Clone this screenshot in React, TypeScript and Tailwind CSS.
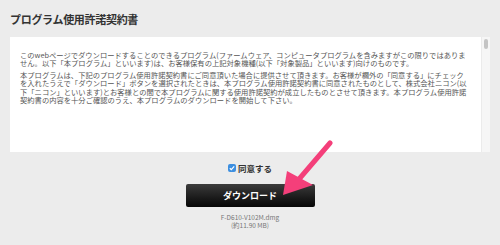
import React from "react";

const font = { fontFamily: '"Noto Sans CJK JP", "Noto Sans", sans-serif' };

const para1 = [
  "このwebページでダウンロードすることのできるプログラム(ファームウェア、コンピュータプログラムを含みますがこの限りではありま",
  "せん。以下「本プログラム」といいます)は、お客様保有の上記対象機種(以下「対象製品」といいます)向けのものです。",
];

const para2 = [
  "本プログラムは、下記のプログラム使用許諾契約書にご同意頂いた場合に提供させて頂きます。お客様が欄外の「同意する」にチェック",
  "を入れたうえで「ダウンロード」ボタンを選択されたときは、本プログラム使用許諾契約書に同意されたものとして、株式会社ニコン(以",
  "下「ニコン」といいます)とお客様との間で本プログラムに関する使用許諾契約が成立したものとさせて頂きます。本プログラム使用許諾",
  "契約書の内容を十分ご確認のうえ、本プログラムのダウンロードを開始して下さい。",
];

const Lines = ({ lines }: { lines: string[] }) => (
  <div className="text-[7.3px] leading-[8.4px] text-[#555]">
    {lines.map((l, i) => (
      <div key={i} className="h-[8.4px] whitespace-nowrap">
        {l}
      </div>
    ))}
  </div>
);

export default function App() {
  return (
    <div className="relative w-[500px] h-[245px] overflow-hidden bg-[#ececec] px-[10px] pt-[13px]" style={font}>
      <h1 className="h-[12px] text-[11px] leading-[12px] font-bold text-[#333] tracking-[-0.3px]">プログラム使用許諾契約書</h1>

      {/* agreement box */}
      <div className="mt-[12px] flex h-[115px] w-[480px] bg-white">
        <div className="flex-1 pl-[10px] pt-[14px]">
          <Lines lines={para1} />
          <div className="mt-[3px]">
            <Lines lines={para2} />
          </div>
        </div>
        <div className="w-[9px] border-l border-[#ebebeb] bg-[#f6f6f6] pt-[2px]">
          <div className="mx-auto h-[10px] w-[4px] rounded-full bg-[#c4c4c4]" />
        </div>
      </div>

      <div className="flex flex-col items-center">
        <label className="mt-[11px] flex items-center gap-[2px]">
          <span className="flex h-[8px] w-[8px] items-center justify-center rounded-[2px] bg-[#3d8fe0]">
            <svg viewBox="0 0 8 8" className="h-[8px] w-[8px]">
              <path d="M1.8 4.2 L3.3 5.6 L6.2 2.4" fill="none" stroke="white" strokeWidth="1.2" />
            </svg>
          </span>
          <span className="text-[8.5px] leading-[10px] font-bold text-[#333]">同意する</span>
        </label>

        <button className="mt-[11px] flex h-[23px] w-[129px] items-center justify-center rounded-[2px] bg-gradient-to-b from-[#3c3c3c] to-[#070707] text-[9px] font-bold text-white">
          ダウンロード
        </button>

        <div className="mt-[7px] text-center text-[6.5px] leading-[7.5px] text-[#777]">
          <div>F-D610-V102M.dmg</div>
          <div>(約11.90 MB)</div>
        </div>
      </div>

      {/* annotation arrow */}
      <svg className="absolute left-[280px] top-[140px]" width="55" height="60" viewBox="0 0 55 60">
        <line x1="50" y1="3" x2="20" y2="38" stroke="#f43f7a" strokeWidth="5" strokeLinecap="round" />
        <polygon points="3,55 7,31 33,45" fill="#f43f7a" />
      </svg>
    </div>
  );
}
